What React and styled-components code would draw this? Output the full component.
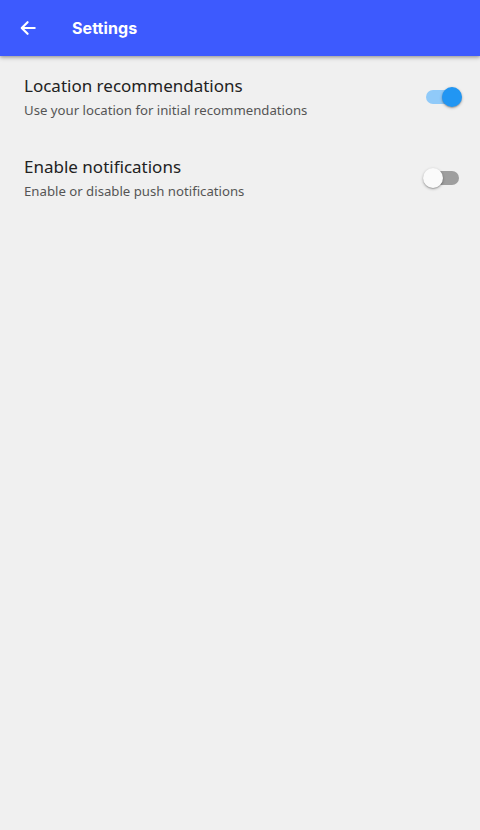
import React, { useState } from "react";
import styled, { createGlobalStyle } from "styled-components";

const Global = createGlobalStyle`
  html, body { margin: 0; padding: 0; background: #f0f0f0; }
  body { font-family: "Noto Sans", "Open Sans", sans-serif; }
  #root { min-height: 830px; }
`;

const Page = styled.div`
  min-height: 830px;
  background: #f0f0f0;
`;

const AppBar = styled.header`
  height: 56px;
  background: #3d5afe;
  display: flex;
  align-items: center;
  padding: 0 16px;
  box-shadow: 0 2px 4px rgba(0, 0, 0, 0.25), 0 1px 2px rgba(0, 0, 0, 0.12);
  position: relative;
  z-index: 1;
`;

const BackButton = styled.button`
  width: 24px;
  height: 24px;
  padding: 0;
  border: 0;
  background: none;
  display: flex;
  align-items: center;
  justify-content: center;
  color: #fff;
`;

const Title = styled.h1`
  margin: 0 0 0 32px;
  font-family: "Inter", "Open Sans", sans-serif;
  font-weight: 700;
  font-size: 16px;
  color: #fff;
  letter-spacing: 0.1px;
`;

const List = styled.div`
  display: flex;
  flex-direction: column;
  padding-top: 18px;
`;

const Row = styled.div`
  display: flex;
  align-items: flex-start;
  padding: 0 21px 0 24px;
  height: 81px;
  box-sizing: border-box;
`;

const Texts = styled.div`
  flex: 1;
  display: flex;
  flex-direction: column;
`;

const RowTitle = styled.div`
  font-size: 17px;
  line-height: 24px;
  color: #222;
`;

const RowSub = styled.div`
  font-size: 13.2px;
  line-height: 20px;
  margin-top: 2px;
  color: #555;
`;

const SwitchWrap = styled.button`
  position: relative;
  width: 40px;
  height: 24px;
  margin-top: 11px;
  padding: 0;
  border: 0;
  background: none;
  cursor: pointer;
`;

const Track = styled.span`
  position: absolute;
  left: 7px;
  top: 5px;
  width: 33px;
  height: 14px;
  border-radius: 7px;
  background: ${(p) => (p.$on ? "#90caf9" : "#9e9e9e")};
`;

const Thumb = styled.span`
  position: absolute;
  top: 2px;
  left: ${(p) => (p.$on ? "23px" : "4px")};
  width: 20px;
  height: 20px;
  border-radius: 50%;
  background: ${(p) => (p.$on ? "#2196f3" : "#fafafa")};
  box-shadow: 0 1px 3px rgba(0, 0, 0, 0.3), 0 1px 1px rgba(0, 0, 0, 0.14);
`;

function Switch({ on, onToggle }) {
  return (
    <SwitchWrap onClick={onToggle} aria-pressed={on}>
      <Track $on={on} />
      <Thumb $on={on} />
    </SwitchWrap>
  );
}

export default function App() {
  const [loc, setLoc] = useState(true);
  const [notif, setNotif] = useState(false);
  return (
    <Page>
      <Global />
      <AppBar>
        <BackButton aria-label="Back">
          <svg width="20" height="20" viewBox="0 0 24 24" fill="none" stroke="#fff" strokeWidth="2.6" strokeLinecap="round" strokeLinejoin="round">
            <path d="M20 12H5" />
            <path d="M11.5 5L4.5 12l7 7" />
          </svg>
        </BackButton>
        <Title>Settings</Title>
      </AppBar>
      <List>
        <Row>
          <Texts>
            <RowTitle>Location recommendations</RowTitle>
            <RowSub>Use your location for initial recommendations</RowSub>
          </Texts>
          <Switch on={loc} onToggle={() => setLoc(!loc)} />
        </Row>
        <Row>
          <Texts>
            <RowTitle>Enable notifications</RowTitle>
            <RowSub>Enable or disable push notifications</RowSub>
          </Texts>
          <Switch on={notif} onToggle={() => setNotif(!notif)} />
        </Row>
      </List>
    </Page>
  );
}
